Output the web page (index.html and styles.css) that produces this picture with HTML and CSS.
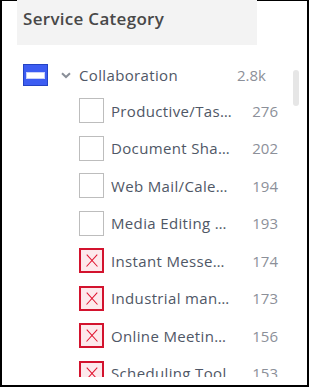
FILE: index.html
```html
<!DOCTYPE html>
<html lang="en">
<head>
    <meta charset="UTF-8">
    <title>Service Category</title>
    <link rel="stylesheet" href="styles.css">
</head>
<body>
    <div class="panel">
        <div class="header">Service Category</div>

        <div class="tree">
            <div class="row parent">
                <span class="box partial"></span>
                <svg class="chevron" width="10" height="7" viewBox="0 0 10 7">
                    <path d="M1 1.2 L5 5 L9 1.2" fill="none" stroke="#8a8f98" stroke-width="2"/>
                </svg>
                <span class="label">Collaboration</span>
                <span class="count">2.8k</span>
            </div>

            <div class="row child">
                <span class="box"></span>
                <span class="label">Productive/Task Management</span>
                <span class="count">276</span>
            </div>
            <div class="row child">
                <span class="box"></span>
                <span class="label">Document Sharing</span>
                <span class="count">202</span>
            </div>
            <div class="row child">
                <span class="box"></span>
                <span class="label">Web Mail/Calendar</span>
                <span class="count">194</span>
            </div>
            <div class="row child">
                <span class="box"></span>
                <span class="label">Media Editing Tools</span>
                <span class="count">193</span>
            </div>
            <div class="row child">
                <span class="box excluded"></span>
                <span class="label">Instant Messenger</span>
                <span class="count">174</span>
            </div>
            <div class="row child">
                <span class="box excluded"></span>
                <span class="label">Industrial management</span>
                <span class="count">173</span>
            </div>
            <div class="row child">
                <span class="box excluded"></span>
                <span class="label">Online Meeting Tools</span>
                <span class="count">156</span>
            </div>
            <div class="row child">
                <span class="box excluded"></span>
                <span class="label">Scheduling Tool</span>
                <span class="count">153</span>
            </div>

            <div class="scrollbar"></div>
        </div>
    </div>
</body>
</html>
```

FILE: styles.css
```css
* {
    margin: 0;
    padding: 0;
    box-sizing: border-box;
}

body {
    font-family: 'Open Sans', 'Liberation Sans', sans-serif;
    background: white;
}

.panel {
    width: 309px;
    height: 387px;
    border: 2px solid #000;
    border-top-width: 1px;
    padding: 0 0 8px 15px;
    display: flex;
    flex-direction: column;
}

.header {
    width: 240px;
    height: 45px;
    margin-top: -1px;
    flex-shrink: 0;
    background: #f3f3f3;
    padding: 7px 0 0 6px;
    font-size: 17px;
    line-height: 24px;
    font-weight: 600;
    letter-spacing: 0.3px;
    color: #484848;
}

.tree {
    position: relative;
    flex: 1;
    overflow: hidden;
    padding-top: 13px;
}

.row {
    display: flex;
    align-items: center;
    font-size: 15px;
    color: #4f5766;
}

.parent {
    height: 34px;
    padding: 0 41px 0 6px;
}

.child {
    height: 37.5px;
    padding: 0 29px 0 62px;
}

.box {
    flex-shrink: 0;
    width: 25px;
    height: 25px;
    border: 1px solid #bdbdbd;
    background: white;
    margin-right: 7px;
    position: relative;
}

.box.partial {
    width: 25px;
    height: 22px;
    background: #3d5df2;
    border-color: #2443c4;
    margin-right: 13px;
}

.box.partial::before {
    content: '';
    position: absolute;
    left: 2px;
    right: 2px;
    top: 7px;
    height: 5px;
    background: white;
    border: 1px solid #c9d2f8;
}

.box.excluded {
    border: 2px solid #d3132e;
    background: #fde9ec;
}

.box.excluded::before,
.box.excluded::after {
    content: '';
    position: absolute;
    left: 2.5px;
    top: 9.8px;
    width: 16px;
    height: 1.3px;
    background: #e0122e;
    transform: rotate(48deg);
}

.box.excluded::after {
    transform: rotate(-48deg);
}

.chevron {
    flex-shrink: 0;
    margin-right: 8px;
}

.label {
    flex: 1;
    min-width: 0;
    white-space: nowrap;
    overflow: hidden;
    text-overflow: ellipsis;
    letter-spacing: 0.35px;
}

.count {
    flex-shrink: 0;
    width: 46px;
    text-align: right;
    color: #8c9099;
}

.parent .count {
    width: 50px;
}

.scrollbar {
    position: absolute;
    left: 276px;
    top: 25px;
    width: 6px;
    height: 36px;
    border-radius: 3px;
    background: #e6e6e6;
}
```
